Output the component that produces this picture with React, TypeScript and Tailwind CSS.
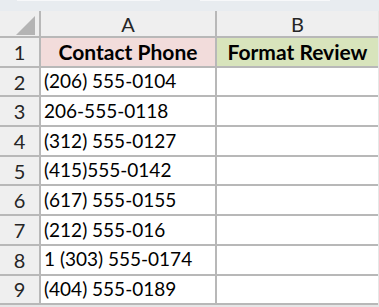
import React from 'react';

const phones = [
  '(206) 555-0104',
  '206-555-0118',
  '(312) 555-0127',
  '(415)555-0142',
  '(617) 555-0155',
  '(212) 555-016',
  '1 (303) 555-0174',
  '(404) 555-0189',
];

export default function App() {
  return (
    <div
      className="w-[379px] h-[307px] overflow-hidden bg-[#e6e6e6] text-[#1a1a1a]"
      style={{ fontFamily: 'Lato, "Open Sans", sans-serif' }}
    >
      {/* Formula bar edge */}
      <div className="h-[11px] bg-[#e8ecf0] flex">
        <div className="ml-[17px] w-[143px] h-px bg-[#f7f8fa]" />
        <div className="ml-[40px] w-[130px] h-px bg-[#f7f8fa]" />
      </div>

      <div className="grid grid-cols-[39px_174px_161px] gap-[2px] bg-[#b8b8b8] w-[378px] pr-[2px] pb-[2px]">
        {/* Column headers */}
        <div className="relative h-[25px] bg-[#efefef]">
          <svg className="absolute left-[16px] top-[5px]" width="19" height="19" viewBox="0 0 19 19">
            <polygon points="0,19 19,19 19,0" fill="#b4b4b4" />
          </svg>
        </div>
        <div className="h-[25px] bg-[#efefef] flex items-center justify-center text-[20px] text-[#262626]">A</div>
        <div className="h-[25px] bg-[#efefef] flex items-center justify-center text-[20px] text-[#262626]">B</div>

        {/* Row 1 */}
        <div className="h-[27.7px] bg-[#efefef] flex items-center justify-center text-[20px] text-[#262626]">1</div>
        <div className="h-[27.7px] bg-[#f2dcdb] flex items-center justify-center text-[21px] font-bold text-black">
          Contact Phone
        </div>
        <div className="h-[27.7px] bg-[#d8e4bc] flex items-center justify-center text-[21px] font-bold text-black">
          Format Review
        </div>

        {phones.map((p, i) => (
          <React.Fragment key={i}>
            <div className="h-[27.7px] bg-[#efefef] flex items-center justify-center text-[20px] text-[#262626]">
              {i + 2}
            </div>
            <div className="h-[27.7px] bg-white flex items-center pl-[3px] text-[19px] text-black whitespace-nowrap overflow-hidden">
              {p}
            </div>
            <div className="h-[27.7px] bg-white" />
          </React.Fragment>
        ))}
      </div>
    </div>
  );
}
